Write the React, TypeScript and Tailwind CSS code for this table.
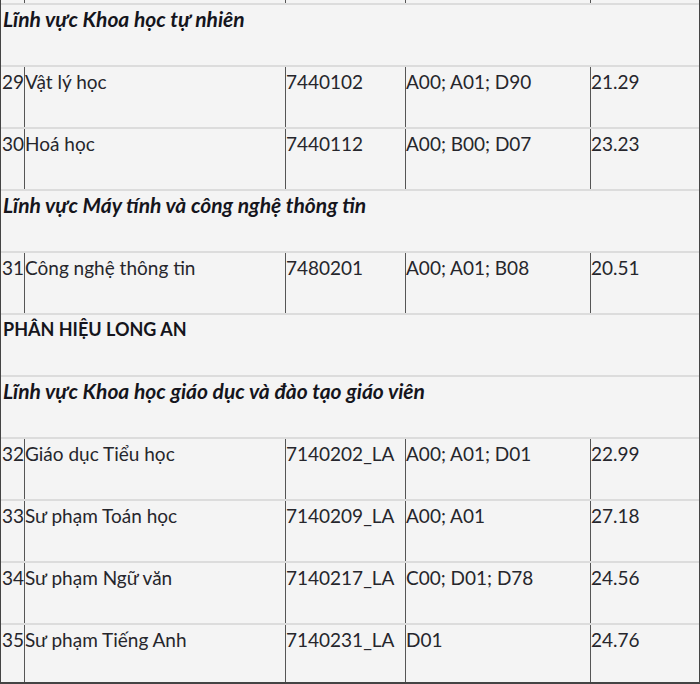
const rows: (
  | { kind: 'section'; title: string; italic?: boolean }
  | { kind: 'item'; no: string; name: string; code: string; combo: string; score: string }
)[] = [
  { kind: 'section', title: 'Lĩnh vực Khoa học tự nhiên', italic: true },
  { kind: 'item', no: '29', name: 'Vật lý học', code: '7440102', combo: 'A00; A01; D90', score: '21.29' },
  { kind: 'item', no: '30', name: 'Hoá học', code: '7440112', combo: 'A00; B00; D07', score: '23.23' },
  { kind: 'section', title: 'Lĩnh vực Máy tính và công nghệ thông tin', italic: true },
  { kind: 'item', no: '31', name: 'Công nghệ thông tin', code: '7480201', combo: 'A00; A01; B08', score: '20.51' },
  { kind: 'section', title: 'PHÂN HIỆU LONG AN' },
  { kind: 'section', title: 'Lĩnh vực Khoa học giáo dục và đào tạo giáo viên', italic: true },
  { kind: 'item', no: '32', name: 'Giáo dục Tiểu học', code: '7140202_LA', combo: 'A00; A01; D01', score: '22.99' },
  { kind: 'item', no: '33', name: 'Sư phạm Toán học', code: '7140209_LA', combo: 'A00; A01', score: '27.18' },
  { kind: 'item', no: '34', name: 'Sư phạm Ngữ văn', code: '7140217_LA', combo: 'C00; D01; D78', score: '24.56' },
  { kind: 'item', no: '35', name: 'Sư phạm Tiếng Anh', code: '7140231_LA', combo: 'D01', score: '24.76' },
];

const cols = 'grid grid-cols-[23px_261px_120px_185px_1fr]';

export default function App() {
  return (
    <div className="h-[684px] w-[700px] overflow-hidden bg-[#f4f4f4] font-['Lato',sans-serif] text-[19px] leading-[28px] text-[#26262c]">
      <div className="flex h-[684px] flex-col border-x border-b-2 border-x-[#444] border-b-[#444]">
        {/* tail of previous row */}
        <div className={`${cols} h-[3px] shrink-0`}>
          <div />
          <div className="border-l border-[#555]" />
          <div className="border-l border-[#555]" />
          <div className="border-l border-[#555]" />
          <div className="border-l border-[#555]" />
        </div>
        {rows.map((r, i) => {
          const last = i === rows.length - 1;
          const h = last ? 'min-h-0 flex-1' : 'h-[62px] shrink-0';
          if (r.kind === 'section') {
            return (
              <div key={i} className={`${h} border-t-2 border-[#dcdcdc] px-[2px]`}>
                <span
                  className={
                    r.italic
                      ? 'text-[21px] font-bold italic text-[#15151c]'
                      : 'text-[18px] font-bold text-[#15151c]'
                  }
                >
                  {r.title}
                </span>
              </div>
            );
          }
          return (
            <div key={i} className={`${cols} ${h} border-t-2 border-[#dcdcdc]`}>
              <div className="pl-[1px] pt-[1px]">{r.no}</div>
              <div className="border-l border-[#555] pt-[1px]">{r.name}</div>
              <div className="border-l border-[#555] pt-[1px]">{r.code}</div>
              <div className="border-l border-[#555] pt-[1px]">{r.combo}</div>
              <div className="border-l border-[#555] pt-[1px]">{r.score}</div>
            </div>
          );
        })}
      </div>
    </div>
  );
}
